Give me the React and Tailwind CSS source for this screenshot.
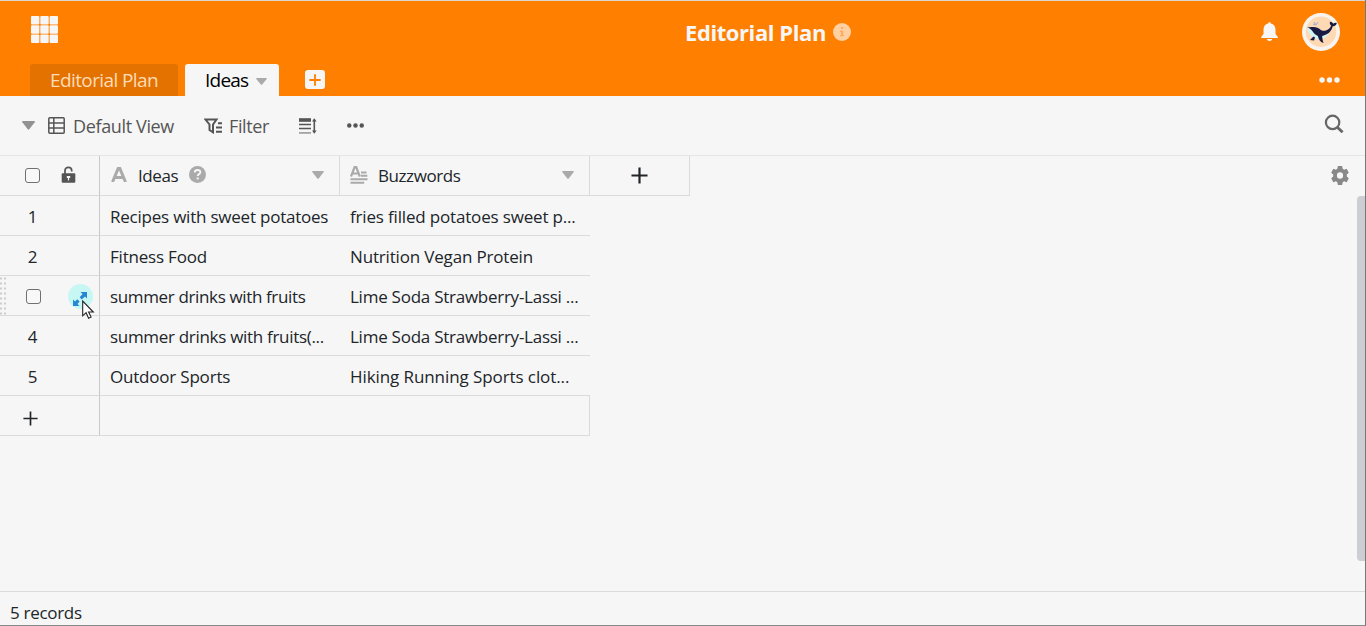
import React from 'react';

const rows = [
  { n: '1', idea: 'Recipes with sweet potatoes', words: 'fries filled potatoes sweet p...', ideaTracking: 'tracking-[-0.013em]', wordsTracking: 'tracking-[-0.010em]' },
  { n: '2', idea: 'Fitness Food', words: 'Nutrition Vegan Protein', ideaTracking: 'tracking-[-0.012em]', wordsTracking: 'tracking-[-0.010em]' },
  { n: '3', idea: 'summer drinks with fruits', words: 'Lime Soda Strawberry-Lassi ...', ideaTracking: 'tracking-[-0.021em]', wordsTracking: 'tracking-[-0.015em]', active: true },
  { n: '4', idea: 'summer drinks with fruits(...', words: 'Lime Soda Strawberry-Lassi ...', ideaTracking: 'tracking-[-0.018em]', wordsTracking: 'tracking-[-0.015em]' },
  { n: '5', idea: 'Outdoor Sports', words: 'Hiking Running Sports clot...', ideaTracking: 'tracking-[-0.012em]', wordsTracking: 'tracking-[-0.005em]' },
];

function Caret({ className }) {
  return (
    <svg className={className} viewBox="0 0 12 8" preserveAspectRatio="none" fill="currentColor">
      <path d="M.6 0h10.800q.7.3.3 1L6.700 7.400q-.7.8-1.400 0L.3 1Q-.1.3.6 0Z" />
    </svg>
  );
}

function Dots({ className }) {
  return (
    <svg className={className} viewBox="0 0 21 6" fill="currentColor">
      <circle cx="3" cy="3" r="2.700" />
      <circle cx="10.500" cy="3" r="2.700" />
      <circle cx="18" cy="3" r="2.700" />
    </svg>
  );
}

function Plus({ className, weight = 2 }) {
  return (
    <svg className={className} viewBox="0 0 18 18" fill="none" stroke="currentColor" strokeWidth={weight}>
      <path d="M9 .5v17M.5 9h17" />
    </svg>
  );
}

function Whale() {
  return (
    <svg className="h-[38px] w-[38px]" viewBox="0 0 38 38">
      <circle cx="19" cy="19" r="19" fill="#f8f5f1" />
      <circle cx="19" cy="18.800" r="15.300" fill="#ffd9b3" />
      <path d="M5 14.500c1 6.500 5 10.500 11 12 5 .4 9-3 11.500-6.500l-9-2.500Z" fill="#d4f4f2" />
      <path d="M5 14.500c3-.8 8.500-.9 12 1 2 1.500 3.500 2.700 6 2.200 3-.6 5-2.500 6.200-5-.8-1.200-1.800-1.600-1.300-4 1.700 0 2.700.7 3.300 2 1.100-.8 2.200-1.200 3.600-.6-.4 2.400-2 3.200-4.200 3.400-.8 3.400-2.700 6.200-6 7.800-1.500.8-3 1.500-4.500 1.800.4 2.200.4 4.500 1.500 7-3.800-1.400-5-4.200-5.700-7.200-2.700-1-3.900-2.300-5.400-4.600-1.200-1.700-2.700-3.500-5.500-3.800Z" fill="#171a42" />
      <path d="M11.500 23.500 8 27l4 .5 1-3Z" fill="#171a42" />
      <path d="m12 9 1.500 2.200M16 9l-2 3M11 11l3 1.200" stroke="#96a9d2" strokeWidth="1" />
    </svg>
  );
}

function Checkbox() {
  return <span className="block h-[15px] w-[15px] rounded-[3px] border-[1.500px] border-[#707070] bg-[#f8f8f8]" />;
}

function Header() {
  return (
    <header className="flex h-24 shrink-0 flex-col border-t border-[#d9d6cf] bg-[#ff8000] text-[#f6f6f6]">
      <div className="flex h-[63px] items-center justify-between pl-[31px] pr-[25px]">
        <svg className="mb-[5px] h-7 w-7" viewBox="0 0 28 28" fill="currentColor">
          {[0, 9.300, 18.600].map((y) =>
            [0, 9.300, 18.600].map((x) => <rect key={`${x}-${y}`} x={x} y={y} width="8.400" height="8.400" rx="1" />)
          )}
        </svg>
        <div className="mb-[2px] ml-[216px] flex items-center gap-[7px]">
          <h1 className="w-[141px] whitespace-nowrap text-[22px] font-bold leading-8 tracking-[-0.019em]">Editorial Plan</h1>
          <svg className="h-[18px] w-[18px]" viewBox="0 0 18 18">
            <circle cx="9" cy="9" r="9" fill="#ffd0a2" />
            <path d="M8 4h2.200v2H8zM7 7.500h3.200V12H11v1.300H7V12h1V9H7z" fill="#ffad5c" />
          </svg>
        </div>
        <div className="mb-[2px] flex items-center justify-end gap-6">
          <svg className="h-[19px] w-[17px]" viewBox="0 0 17 19" fill="currentColor">
            <path d="M7.200 1.500a1.300 1.300 0 0 1 2.600 0c3 .6 4.700 3 4.700 6v4.500l2.300 3q.4 1-.6 1H.8q-1 0-.6-1l2.300-3V7.500c0-3 1.700-5.400 4.700-6ZM5.800 17h5.400c-.4 2.600-5 2.600-5.400 0Z" />
          </svg>
          <Whale />
        </div>
      </div>
      <nav className="flex h-8 items-center pl-[30px] pr-[25px] text-[19px]">
        <div className="flex h-8 w-[148px] items-center rounded-t-[3px] bg-[#e37200] pl-5 text-[#ffdcb8]">
          <span className="whitespace-nowrap tracking-[-0.032em]">Editorial Plan</span>
        </div>
        <div className="ml-[7px] flex h-8 w-[94px] items-center justify-between rounded-t-[3px] bg-[#f6f6f6] pl-5 pr-3 text-black">
          <span className="tracking-[-0.04em]">Ideas</span>
          <Caret className="mt-[3px] h-[7px] w-[11px] text-[#aaa]" />
        </div>
        <div className="mb-[1px] ml-[26px] flex h-[19px] w-5 items-center justify-center rounded-[3px] bg-[#f6f6f6] text-[#ff8000]">
          <Plus className="h-3 w-3" weight={2.800} />
        </div>
        <Dots className="mb-[1px] ml-auto h-[6px] w-[21px]" />
      </nav>
    </header>
  );
}

function Toolbar() {
  return (
    <div className="flex h-[59px] shrink-0 items-center pl-[22px] pr-[21px] text-[18px] text-[#555]">
      <Caret className="h-[9px] w-[13px] text-[#929292]" />
      <svg className="ml-[13px] h-[17px] w-[17px]" viewBox="0 0 17 17" fill="none" stroke="currentColor" strokeWidth="1.500">
        <rect x=".8" y=".8" width="15.400" height="15.400" rx="1" />
        <path d="M.8 6h15.400M.8 10.900h15.400M5.800.8v15.400" />
      </svg>
      <span className="ml-2 w-[102px] whitespace-nowrap tracking-[-0.02em]">Default View</span>
      <svg className="ml-[29px] h-4 w-[19px]" viewBox="0 0 19 16" fill="none" stroke="currentColor" strokeWidth="2">
        <path d="M1.500 1.500h11L9 6.500v7.800L5.500 12V6.500Z" />
        <path d="M14 5.200h4M12 9.400h6M12 13.700h6" />
      </svg>
      <span className="ml-[6px] w-10 whitespace-nowrap tracking-[-0.02em]">Filter</span>
      <svg className="ml-[30px] h-4 w-[18px]" viewBox="0 0 18 16" fill="none" stroke="currentColor">
        <path d="M0 2h12" strokeWidth="3.600" />
        <path d="M0 6.500h12M0 10.500h12" strokeWidth="1.300" />
        <path d="M0 14.900h12" strokeWidth="1.600" className="text-[#999]" />
        <path d="M15.300 1.500v13" strokeWidth="1.600" />
        <path d="m13 3.500 2.300-3.200 2.300 3.200Zm0 9 2.300 3.200 2.300-3.200Z" fill="currentColor" stroke="none" />
      </svg>
      <Dots className="ml-[29px] h-[5px] w-[19px]" />
      <svg className="mb-1 ml-auto h-5 w-5" viewBox="0 0 20 20" fill="none" stroke="#666" strokeWidth="2.200">
        <circle cx="8.600" cy="8.400" r="6.700" />
        <path d="m13.300 13.200 5.300 5.100" strokeWidth="2.800" />
      </svg>
    </div>
  );
}

function GridHeader() {
  return (
    <div className="flex h-[41px] border-t border-[#e5e5e5]">
      <div className="flex w-[100px] items-center border-b border-r border-b-[#dbdbdb] border-r-[#c9c9c9] pl-[25px]">
        <Checkbox />
        <svg className="mb-[3px] ml-[21px] h-[17px] w-[15px]" viewBox="0 0 15 17">
          <path d="M4 8V4.500C4 .2 10.700.2 10.700 4.500v1" fill="none" stroke="#555" strokeWidth="1.700" />
          <rect x=".7" y="7.200" width="13.600" height="9.600" rx="1" fill="#555" />
          <path d="M5.800 10h3.400v2H8.100v2.500H6.900V12H5.800Z" fill="#f6f6f6" />
        </svg>
      </div>
      <div className="flex w-60 items-center border-b border-r border-[#dbdbdb] pl-[11px] pr-[15px]">
        <svg className="mb-[2px] h-[15px] w-4" viewBox="0 0 16 15" fill="none" stroke="#aaa" strokeWidth="3">
          <path d="M1.500 15 7.200 1.300h1.600L14.500 15M4 10.500h8" />
        </svg>
        <span className="ml-[11px] w-[41px] tracking-[-0.025em]">Ideas</span>
        <svg className="mb-[3px] ml-[10px] h-[17px] w-[17px]" viewBox="0 0 17 17">
          <circle cx="8.500" cy="8.500" r="8.500" fill="#aaa" />
          <path d="M5.700 6.500C5.900 3 11.600 3.200 11.300 6.400c-.2 1.700-2.600 1.800-2.600 3.600" fill="none" stroke="#f6f6f6" strokeWidth="1.900" />
          <rect x="7.700" y="11.400" width="2" height="2" fill="#f6f6f6" />
        </svg>
        <Caret className="mb-[1px] ml-auto h-2 w-3 text-[#aaa]" />
      </div>
      <div className="flex w-[250px] items-center border-b border-r border-[#dbdbdb] pl-[10px] pr-[15px]">
        <svg className="mb-[2px] h-[18px] w-[18px]" viewBox="0 0 18 18" fill="none" stroke="#aaa">
          <path d="M1 10.500 4.600 1.200h1.600L9.800 10.500M3 7.500h5" strokeWidth="2.200" />
          <path d="M11 6.500h5.500M10.800 9.800h6.500M.5 13.200h17M.5 16.700h13.700" strokeWidth="2.100" />
        </svg>
        <span className="ml-[10px] tracking-[-0.025em]">Buzzwords</span>
        <Caret className="mb-[1px] ml-auto h-2 w-3 text-[#aaa]" />
      </div>
      <div className="flex w-[100px] items-center justify-center border-b border-r border-[#dbdbdb]">
        <Plus className="mb-[1px] h-[17px] w-[17px]" weight={2.300} />
      </div>
      <svg className="ml-auto mr-4 mt-[10px] h-[19px] w-[18px]" viewBox="0 0 18 18" preserveAspectRatio="none" fill="#888">
        <path fillRule="evenodd" d="M6.900 0h4.200l.6 2.700 1.400.8 2.600-.9 2.100 3.700-2 1.800v1.800l2 1.800-2.100 3.700-2.600-.9-1.400.8-.6 2.700H6.900l-.6-2.700-1.400-.8-2.600.9L.2 11.700l2-1.800V8.100l-2-1.800 2.100-3.700 2.600.9 1.400-.8ZM9 5.900a3.100 3.100 0 1 0 0 6.200 3.100 3.100 0 0 0 0-6.200Z" />
      </svg>
    </div>
  );
}

function Row({ row }) {
  return (
    <div className="flex h-10 w-[590px]">
      <div className="relative flex w-[100px] items-center border-b border-r border-b-[#dbdbdb] border-r-[#c9c9c9]">
        {row.active ? (
          <>
            <svg className="h-[39px] w-[26px] shrink-0" viewBox="0 0 26 39" fill="none" stroke="#ccc" strokeWidth="2">
              <path d="M1 1.500v37M5 1.500v37" strokeDasharray="2 3" />
            </svg>
            <span className="mt-[2px]">
              <Checkbox />
            </span>
            <span className="ml-[27px] mt-[2px] flex h-[25px] w-[25px] items-center justify-center rounded-full bg-[#c6f7f3]">
              <svg className="mr-[2px] mt-1 h-[14px] w-[14px]" viewBox="0 0 14 14" fill="#2785d3">
                <path d="M7.500 0H14v6.500l-2-2-3.300 3L6.700 5.300 9.600 2ZM6.500 14H0V7.500l2 2 2.300-2.200 2.300 2.200L4.500 12Z" />
              </svg>
            </span>
            <svg className="absolute left-[82px] top-[24px] z-10 h-[19px] w-[13px]" viewBox="0 0 13 19">
              <path d="M.7 1v14.800L4.100 12.700l2.500 5.500 2.500-1.200-2.500-5h4.700Z" fill="#fff" stroke="#222" strokeWidth="1.100" />
            </svg>
          </>
        ) : (
          <span className="w-[65px] pt-[2px] text-center">{row.n}</span>
        )}
      </div>
      <div className={`flex w-60 items-center whitespace-nowrap border-b border-[#dbdbdb] pl-[10px] pt-[2px] ${row.ideaTracking}`}>{row.idea}</div>
      <div className={`flex w-[250px] items-center whitespace-nowrap border-b border-[#dbdbdb] pl-[10px] pt-[2px] ${row.wordsTracking}`}>{row.words}</div>
    </div>
  );
}

export default function App() {
  return (
    <div className="flex h-[626px] w-[1366px] flex-col overflow-hidden border-b border-r border-b-[#898989] border-r-[#777] bg-[#f6f6f6] font-['Open_Sans',sans-serif] text-[17px] leading-6 text-[#212529]">
      <Header />
      <Toolbar />
      <main className="flex h-[436px] flex-col">
        <GridHeader />
        <div className="flex flex-1 justify-between">
          <div className="flex flex-col">
            {rows.map((row) => (
              <Row key={row.n} row={row} />
            ))}
            <div className="flex h-10 w-[590px]">
              <div className="flex w-[100px] items-center border-b border-r border-b-[#dbdbdb] border-r-[#c9c9c9] pl-[23px] pt-[5px]">
                <Plus className="h-[15px] w-[15px]" />
              </div>
              <div className="flex-1 border-b border-r border-[#dbdbdb]" />
            </div>
          </div>
          <div className="h-[365px] w-2 rounded-l-[4px] bg-[#cdced3]" />
        </div>
      </main>
      <footer className="h-[34px] border-t border-[#dbdbdb] pl-[10px] pt-[9px] tracking-[-0.018em]">5 records</footer>
    </div>
  );
}
